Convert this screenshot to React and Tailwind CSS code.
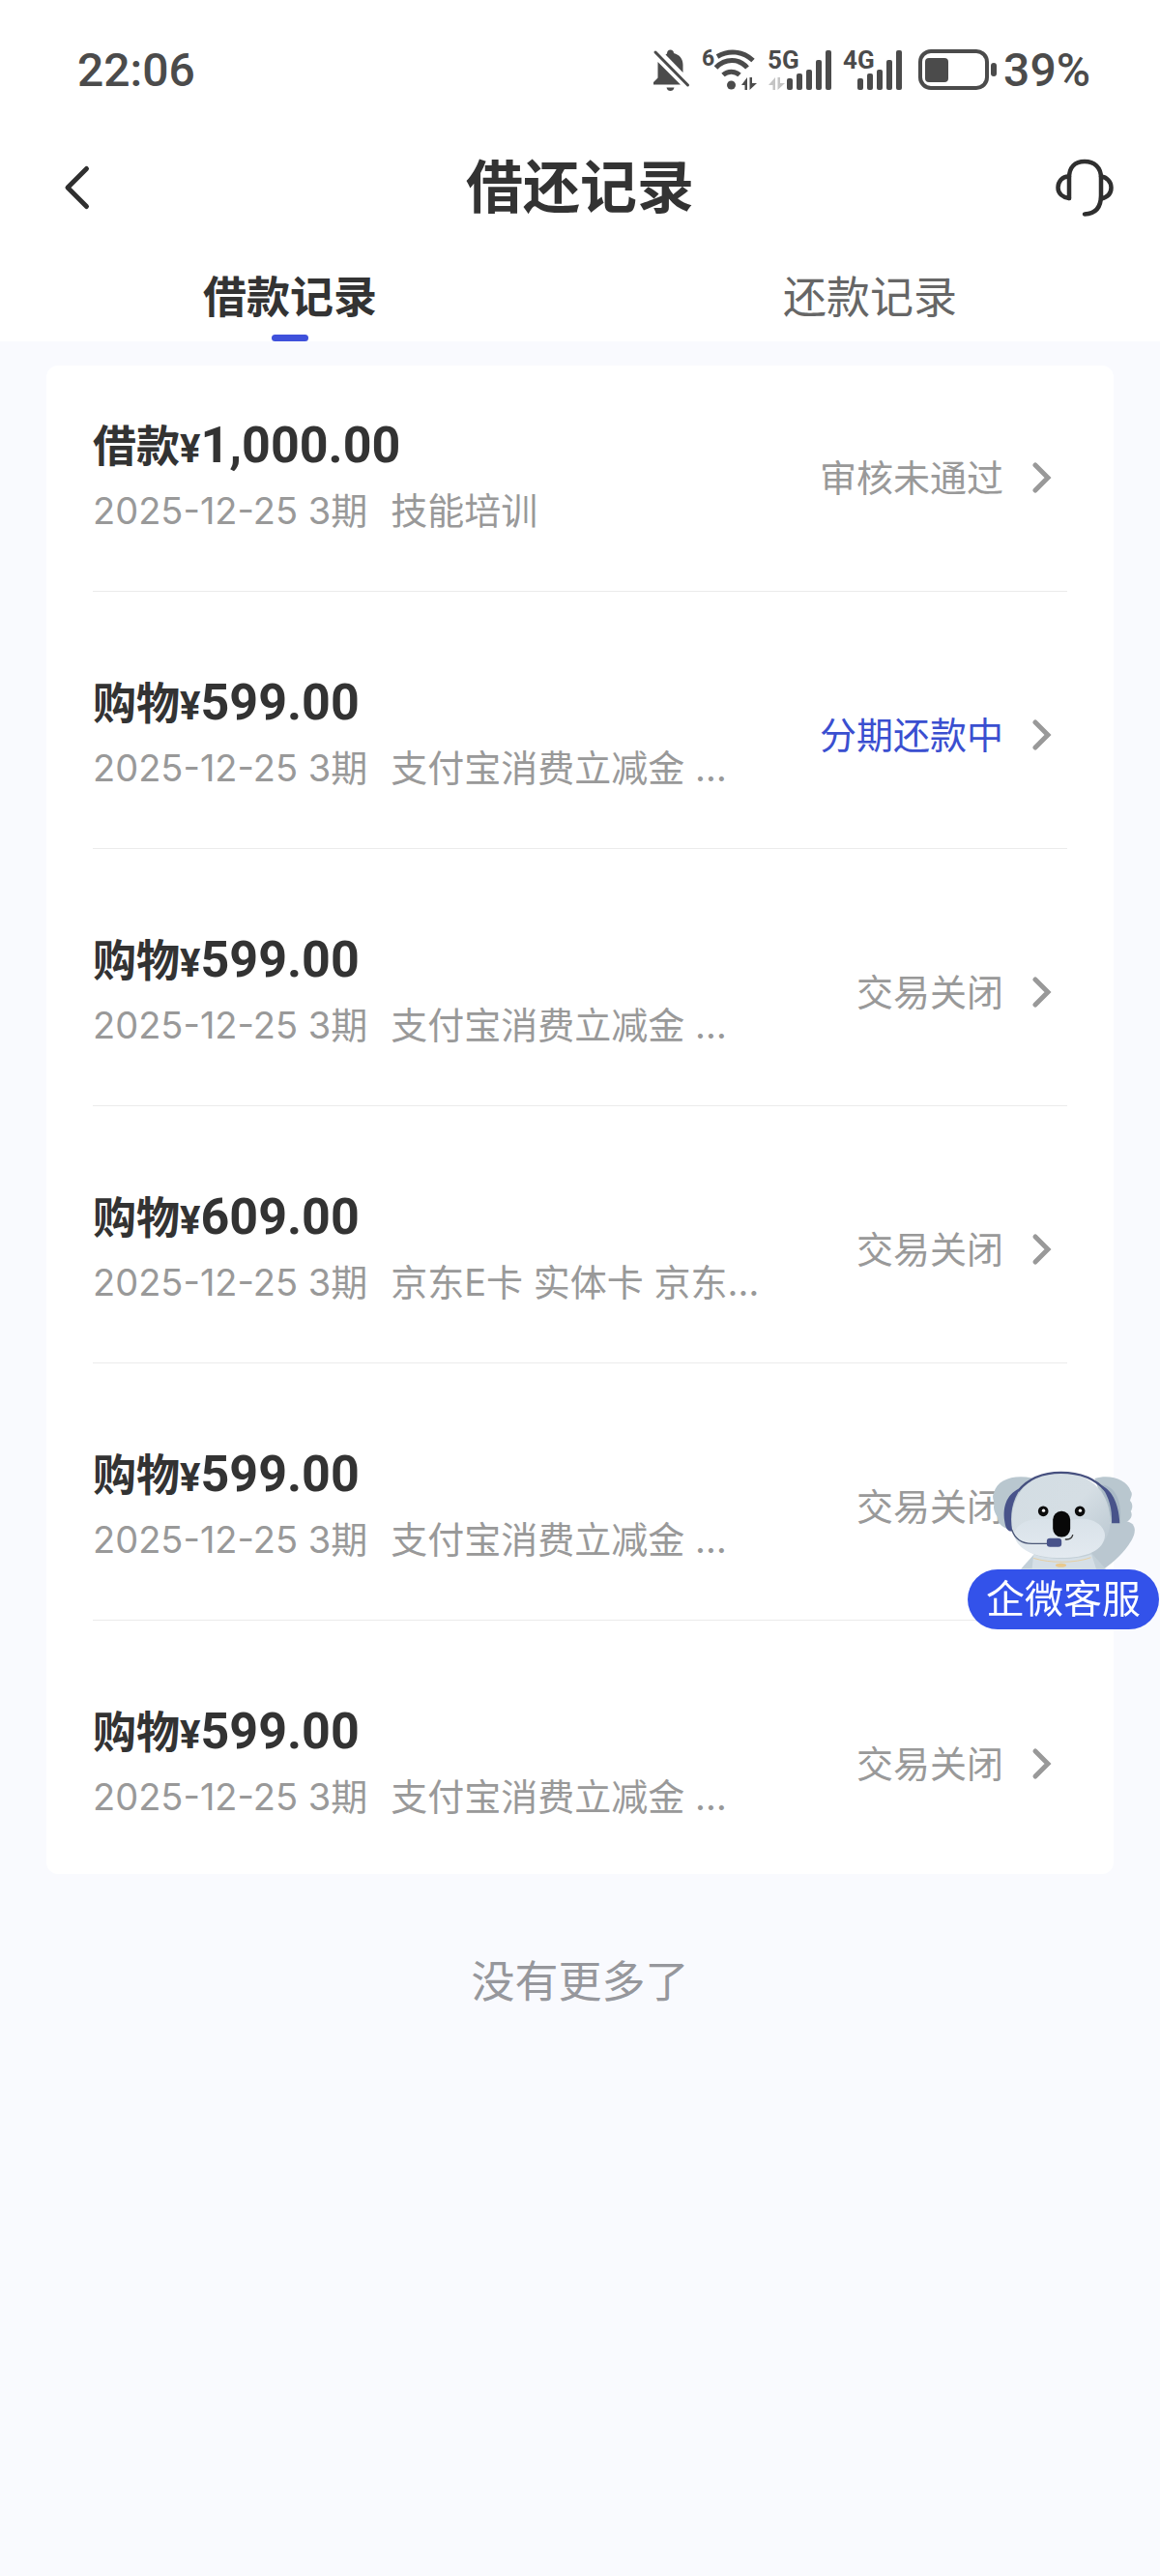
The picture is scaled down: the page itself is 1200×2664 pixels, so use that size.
import { useState } from "react";

const TABS = [
  { id: "borrow", label: "借款记录" },
  { id: "repay", label: "还款记录" },
];

const RECORDS = [
  { id: 1, type: "借款", amount: "1,000.00", date: "2025-12-25", periods: 3, title: "技能培训", status: "审核未通过" },
  { id: 2, type: "购物", amount: "599.00", date: "2025-12-25", periods: 3, title: "支付宝消费立减金 …", status: "分期还款中", active: true },
  { id: 3, type: "购物", amount: "599.00", date: "2025-12-25", periods: 3, title: "支付宝消费立减金 …", status: "交易关闭" },
  { id: 4, type: "购物", amount: "609.00", date: "2025-12-25", periods: 3, title: "京东E卡 实体卡 京东…", status: "交易关闭" },
  { id: 5, type: "购物", amount: "599.00", date: "2025-12-25", periods: 3, title: "支付宝消费立减金 …", status: "交易关闭" },
  { id: 6, type: "购物", amount: "599.00", date: "2025-12-25", periods: 3, title: "支付宝消费立减金 …", status: "交易关闭" },
];

function BellOffIcon() {
  return (
    <svg width="40" height="46" viewBox="0 0 40 46" fill="#4b4b4b">
      <path d="M15 5.500C15 3 16.500 1.500 18.500 1.500S22 3 22 5C28 6.500 31.500 11 31.500 17V25L13.500 6.500Z" />
      <path d="M5.500 14L29 37.500H1V35L5.500 30.500Z" />
      <path d="M14.500 40.500H22.500C22 43 20.500 44 18.500 44S15 43 14.500 40.500Z" />
      <path d="M3 4L36.500 38" stroke="#4b4b4b" strokeWidth="3" strokeLinecap="round" />
    </svg>
  );
}

function WifiIcon() {
  return (
    <svg width="56" height="46" viewBox="0 0 56 46" fill="none" className="overflow-visible">
      <text x="-1" y="18" fontSize="23" fontWeight="700" fill="#4b4b4b" className="font-['Roboto',sans-serif]">6</text>
      <path d="M15 8.500C27 1.500 41 2.500 52 12.500" stroke="#4b4b4b" strokeWidth="5" />
      <path d="M13.500 20C23 10 37.500 10 46 20" stroke="#4b4b4b" strokeWidth="5" />
      <path d="M21 27.500C26 23 33 23 38 27.500" stroke="#4b4b4b" strokeWidth="5" />
      <circle cx="29.500" cy="38" r="4.500" fill="#4b4b4b" />
      <path d="M46 30V43H43.500V38H40ZM48.500 30H51V36H56L48.500 43Z" fill="#4b4b4b" />
    </svg>
  );
}

function SignalIcon({ label, data }) {
  const width = data ? 66 : 61;
  return (
    <svg width={width} height="46" viewBox={`0 0 ${width} 46`} fill="#4b4b4b" className="overflow-visible">
      <text x="-1" y="21" fontSize="26" fontWeight="700" className="font-['Roboto',sans-serif]">
        {label}
      </text>
      {data && <path d="M7 30V43H4.500V38H0ZM9.500 30H12V36H17L9.500 43Z" fill="#c4c4c4" />}
      <g transform={data ? "translate(5 0)" : undefined}>
        <rect x="14" y="31" width="6" height="12" rx="2" />
        <rect x="24" y="26" width="6" height="17" rx="2" />
        <rect x="34" y="22" width="6" height="21" rx="2" />
        <rect x="44" y="12" width="6" height="31" rx="2" />
        <rect x="54" y="2" width="6" height="41" rx="2" />
      </g>
    </svg>
  );
}

function BatteryIcon() {
  return (
    <svg width="82" height="46" viewBox="0 0 82 46" fill="#4b4b4b">
      <rect x="2" y="3" width="69" height="38" rx="11" fill="none" stroke="#4b4b4b" strokeWidth="4" />
      <rect x="7" y="10" width="24" height="25" rx="4" />
      <rect x="75" y="15" width="6" height="14" rx="3" />
    </svg>
  );
}

function StatusBar() {
  return (
    <div className="flex h-36 items-center justify-between pl-20 pr-18 pt-0.5 font-['Roboto',sans-serif] text-[48px] font-medium leading-[56px] text-[#4b4b4b]">
      <span>22:06</span>
      <div className="flex items-center">
        <BellOffIcon />
        <span className="ml-3 flex items-center gap-3">
          <WifiIcon />
          <SignalIcon label="5G" data />
          <SignalIcon label="4G" />
        </span>
        <span className="ml-4 mr-1.5">
          <BatteryIcon />
        </span>
        <span>39%</span>
      </div>
    </div>
  );
}

function NavBar() {
  return (
    <div className="flex h-25 items-center justify-between px-12">
      <button type="button" aria-label="返回" className="flex w-16 justify-center">
        <svg width="32" height="48" viewBox="0 0 32 48" fill="none" stroke="#2f2f2f" strokeWidth="5" strokeLinecap="round" strokeLinejoin="round">
          <path d="M25.500 4.500L6 24L25.500 43.500" />
        </svg>
      </button>
      <h1 className="text-[59px] font-bold leading-[72px] text-[#333]">借还记录</h1>
      <button type="button" aria-label="客服" className="flex w-16 justify-end">
        <svg width="60" height="60" viewBox="0 0 60 60" fill="none" stroke="#2f2f2f" strokeWidth="4.500" strokeLinecap="round" strokeLinejoin="round">
          <path d="M14 41V20C14 9 20 3 30 3S47 9 47 20V38C47 50 42 57 30 57.500" />
          <path d="M14 18.500C7 18 2.500 24 2.500 30S7 40 14 41" />
          <path d="M47 18.500C53 19 57.500 24 57.500 30S54 40 47 41.500" />
        </svg>
      </button>
    </div>
  );
}

function RecordRow({ record }) {
  return (
    <li className="border-b border-[#ebebeb] pb-[51px] pt-[50px] last:border-0 last:pb-12">
      <a href={`#record-${record.id}`} className="flex items-center justify-between">
        <div>
          <p className="h-[66px] text-[45px] font-bold leading-[66px] text-[#333]">
            {record.type}
            <span className="font-['Roboto',sans-serif]">
              <span className="text-[40px]">¥</span>
              <span className="text-[52px]">{record.amount}</span>
            </span>
          </p>
          <p className="mt-0.5 flex h-16 gap-6 text-[38px] leading-[64px] text-[#999]">
            <span>
              {record.date} {record.periods}期
            </span>
            <span>{record.title}</span>
          </p>
        </div>
        <div className={`flex items-center pr-3 text-[38px] leading-[56px] ${record.active ? "text-[#3a4fd0]" : "text-[#999]"}`}>
          {record.status}
          <svg className="ml-[26px]" width="28" height="36" viewBox="0 0 28 36" fill="none" stroke="#999" strokeWidth="5" strokeLinecap="round">
            <path d="M7 5L20 18L7 31" />
          </svg>
        </div>
      </a>
    </li>
  );
}

function Koala() {
  return (
    <svg width="148" height="103" viewBox="200 120 445 308" fill="none">
      <defs>
        <linearGradient id="head" x1="0" y1="0" x2="1" y2="1">
          <stop offset="0" stopColor="#d3dde3" />
          <stop offset="0.500" stopColor="#d5dee4" />
          <stop offset="1" stopColor="#b6c4ce" />
        </linearGradient>
        <linearGradient id="muzzle" x1="0" y1="0" x2="0" y2="1">
          <stop offset="0" stopColor="#d9e2e9" />
          <stop offset="1" stopColor="#e3eaf0" />
        </linearGradient>
      </defs>
      {/* arm and body */}
      <path d="M615 278C650 285 650 310 635 338C610 380 580 405 548 428H480L520 340L575 278Z" fill="#bac7d0" />
      <path d="M290 428L335 378H510L555 428Z" fill="#c3d0d8" />
      <path d="M330 382C380 400 460 400 510 382L525 428H325Z" fill="#d5dfe6" />
      {/* ears */}
      <path d="M325 145C270 132 215 150 207 190C198 205 208 215 207 228C203 245 212 255 217 266C218 292 240 300 262 308Z" fill="#b9c7cf" />
      <path d="M520 146C570 132 620 150 632 185C640 195 632 205 630 215C640 225 638 240 632 248C640 262 632 278 612 284L570 290Z" fill="#b9c7cf" />
      <path d="M535 165C575 165 605 200 600 280H575Z" fill="#a9b9c5" />
      {/* head */}
      <path d="M262 290C258 190 320 128 415 128C510 128 572 195 568 285C565 355 505 395 415 395C325 395 266 360 262 290Z" fill="url(#head)" />
      <path d="M268 320C280 275 340 265 390 275H450C510 262 550 290 552 322C550 370 495 393 415 393C335 393 280 370 268 320Z" fill="url(#muzzle)" />
      {/* headset */}
      <path d="M282 185C315 145 360 128 415 128C475 128 520 145 555 185" stroke="#46507f" strokeWidth="7" />
      <path d="M292 175C250 190 232 230 240 280C243 305 252 312 264 310C255 260 262 215 292 175Z" fill="#48538a" />
      <path d="M540 168C570 178 595 220 598 285H573C575 240 565 205 540 168Z" fill="#48538a" />
      <path d="M262 305C272 335 295 349 325 349H375" stroke="#4c5878" strokeWidth="4" />
      {/* face */}
      <circle cx="360" cy="248" r="16" fill="#0c0c0c" />
      <circle cx="474" cy="248" r="16" fill="#0c0c0c" />
      <circle cx="361" cy="246" r="5" fill="#fff" />
      <circle cx="475" cy="246" r="5" fill="#fff" />
      <rect x="390" y="248" width="54" height="80" rx="26" fill="#080808" />
      <path d="M428 335C440 337 449 332 452 321" stroke="#333" strokeWidth="4" />
      <rect x="371" y="332" width="46" height="27" rx="10" fill="#48538a" />
      {/* necklace */}
      <path d="M330 394C380 410 460 410 508 392" stroke="#e6cfa3" strokeWidth="3" />
      <ellipse cx="415" cy="416" rx="17" ry="6" fill="#e9c98d" />
    </svg>
  );
}

function ServiceButton() {
  return (
    <button type="button" className="fixed bottom-[979px] right-px flex flex-col items-center">
      <Koala />
      <span className="rounded-full bg-[#3352ea] px-[19px] text-[40px] leading-[62px] text-white">企微客服</span>
    </button>
  );
}

export default function App() {
  const [tab, setTab] = useState("borrow");

  return (
    <div className="min-h-screen bg-[#f9fafe] font-['Inter','Noto_Sans_CJK_SC',sans-serif]">
      <header className="bg-white">
        <StatusBar />
        <NavBar />
        <nav className="flex pt-7">
          {TABS.map(({ id, label }) => (
            <button
              key={id}
              type="button"
              onClick={() => setTab(id)}
              className={`flex flex-1 flex-col items-center text-[45px] leading-[72px] ${tab === id ? "font-bold text-[#333]" : "text-[#666]"}`}
            >
              {label}
              <span className={`mt-0.5 h-[7px] w-[38px] rounded-full ${tab === id ? "bg-[#3f51db]" : "bg-transparent"}`} />
            </button>
          ))}
        </nav>
      </header>

      <main className="px-12 pt-[25px]">
        <ul className="flex flex-col gap-8 rounded-xl bg-white px-12">
          {RECORDS.map((record) => (
            <RecordRow key={record.id} record={record} />
          ))}
        </ul>
        <p className="py-19 text-center text-[45px] leading-[72px] text-[#96979c]">没有更多了</p>
      </main>

      <ServiceButton />
    </div>
  );
}
